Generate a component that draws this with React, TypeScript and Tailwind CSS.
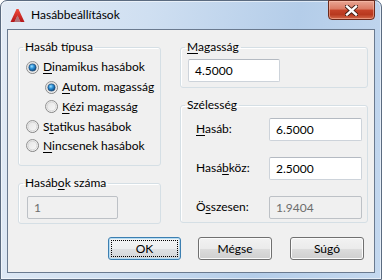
import React, { useId } from "react";

const FONT = { fontFamily: "Lato, 'Noto Sans', 'Liberation Sans', sans-serif" };

function Radio({ checked }: { checked?: boolean }) {
  const id = useId().replace(/:/g, "");
  return (
    <svg width="13" height="13" viewBox="0 0 13 13" className="shrink-0">
      <defs>
        <linearGradient id={`o${id}`} x1="0" y1="0" x2="1" y2="1">
          <stop offset="0" stopColor="#9a9a9a" />
          <stop offset="1" stopColor="#7a7a7a" />
        </linearGradient>
        <linearGradient id={`f${id}`} x1="0" y1="0" x2="1" y2="1">
          <stop offset="0" stopColor="#e2e2e2" />
          <stop offset="1" stopColor="#fbfbfb" />
        </linearGradient>
        <radialGradient id={`d${id}`} cx="0.4" cy="0.35" r="0.7">
          <stop offset="0" stopColor="#9fe0ff" />
          <stop offset="0.45" stopColor="#2a8fd6" />
          <stop offset="1" stopColor="#0c3d6e" />
        </radialGradient>
      </defs>
      <circle cx="6.5" cy="6.5" r="6" fill={`url(#f${id})`} stroke={`url(#o${id})`} strokeWidth="1" />
      <circle cx="6.5" cy="6.5" r="4.4" fill="none" stroke="#d0d0d0" strokeWidth="0.8" />
      {checked && <circle cx="6.5" cy="6.5" r="3.6" fill={`url(#d${id})`} stroke="#1b4b7a" strokeWidth="0.7" />}
    </svg>
  );
}

function Btn({ children, def, w }: { children: React.ReactNode; def?: boolean; w: string }) {
  return (
    <div
      className={`${w} h-[23px] rounded-[3px] border flex p-[2px] text-[12px] text-black ${
        def
          ? "border-[#3c7fb1] shadow-[inset_0_0_0_1px_#b6dcf3] bg-[linear-gradient(to_bottom,#f3f4f5_0%,#eceeef_50%,#dfe1e3_50%,#d3d6d9_100%)]"
          : "border-[#707070] shadow-[inset_0_0_0_1px_#fbfbfb] bg-[linear-gradient(to_bottom,#f2f2f2_0%,#ebebeb_50%,#dddddd_50%,#cfcfcf_100%)]"
      }`}
    >
      <div
        className={`flex-1 flex items-center justify-center leading-none ${
          def ? "border border-dotted border-black" : "border border-transparent"
        }`}
      >
        {children}
      </div>
    </div>
  );
}

function Input({ value, disabled, w }: { value: string; disabled?: boolean; w: string }) {
  return (
    <div
      className={`${w} h-[23px] rounded-[2px] border flex items-center pl-[6px] text-[12px] ${
        disabled ? "border-[#bdc1c6] bg-[#f0f0f0] text-[#6d6d6d]" : "border-[#cdd3da] border-t-[#b4bac2] bg-white text-black"
      }`}
    >
      {value}
    </div>
  );
}

function Group({ legend, className, children }: { legend: React.ReactNode; className: string; children: React.ReactNode }) {
  return (
    <fieldset className={`border border-[#d5dfe5] rounded-[3px] shadow-[inset_1px_1px_0_#fff] ${className}`}>
      <legend className="ml-[4px] px-[2px] text-[12px] leading-[14px] text-black">{legend}</legend>
      {children}
    </fieldset>
  );
}

function RadioRow({ checked, children, h, indent }: { checked?: boolean; children: React.ReactNode; h: string; indent?: boolean }) {
  return (
    <div className={`${h} flex items-center gap-[4px] ${indent ? "pl-[26px]" : "pl-[7px]"} text-[12px] text-black`}>
      <Radio checked={checked} />
      <span>{children}</span>
    </div>
  );
}

export default function App() {
  return (
    <div style={FONT} className="w-[382px] h-[280px] bg-white">
      <div className="w-[382px] h-[280px] rounded-t-[7px] border border-[#5b6b80] shadow-[inset_0_0_0_1px_rgba(255,255,255,0.55)] bg-[linear-gradient(100deg,#e3ebf5_0%,#cfdff1_35%,#b4cde9_70%,#c4d8ef_100%)] flex flex-col">
        <div className="h-[28px] flex items-start shrink-0">
          <div className="flex items-center h-[26px] pl-[9px] pt-[2px] gap-[6px]">
            <svg width="15" height="15" viewBox="0 0 15 15">
              <defs>
                <linearGradient id="aclogo" x1="0" y1="0" x2="0" y2="1">
                  <stop offset="0" stopColor="#f04a3a" />
                  <stop offset="1" stopColor="#b3161a" />
                </linearGradient>
              </defs>
              <path d="M0.5 14 L6.5 1 H8.5 L14.5 14 H10.5 L7.5 7.5 L4.5 14 Z" fill="url(#aclogo)" />
              <path d="M4.5 14 L7.5 7.5 L10.5 14 Z" fill="#8c1010" opacity="0.55" />
            </svg>
            <span className="text-[12px] text-black leading-none">Hasábbeállítások</span>
          </div>
          <div className="ml-auto mr-[6px] -mt-px w-[47px] h-[20px] rounded-b-[4px] border border-[#6b2a1c] shadow-[inset_0_0_0_1px_rgba(255,200,180,0.5)] bg-[linear-gradient(to_bottom,#e8a593_0%,#da7a63_45%,#c54329_50%,#b8391f_75%,#d3694b_100%)] flex items-center justify-center">
            <svg width="13" height="11" viewBox="0 0 13 11">
              <path d="M2 1.5 L11 9.5 M11 1.5 L2 9.5" stroke="#3b1a12" strokeWidth="4.2" strokeLinecap="square" />
              <path d="M2 1.5 L11 9.5 M11 1.5 L2 9.5" stroke="#ffffff" strokeWidth="2.4" strokeLinecap="square" />
            </svg>
          </div>
        </div>
        <div className="mx-[6px] mb-[6px] flex-1 border border-[#6a7a8f] bg-[#f0f0f0] flex flex-col">
          <div className="flex pt-[10px] pl-[10px] pr-[6px] gap-[19px]">
            <div className="w-[143px] flex flex-col">
              <Group legend="Hasáb típusa" className="h-[126px]">
                <div className="pt-[3px] flex flex-col">
                  <RadioRow checked h="h-[20px]">
                    <u className="underline-offset-2">D</u>inamikus hasábok
                  </RadioRow>
                  <RadioRow checked indent h="h-[20px]">
                    <u className="underline-offset-2">A</u>utom. magasság
                  </RadioRow>
                  <RadioRow indent h="h-[19px]">
                    <u className="underline-offset-2">K</u>ézi magasság
                  </RadioRow>
                  <RadioRow h="h-[21px]">
                    S<u className="underline-offset-2">t</u>atikus hasábok
                  </RadioRow>
                  <RadioRow h="h-[17px]">
                    <u className="underline-offset-2">N</u>incsenek hasábok
                  </RadioRow>
                </div>
              </Group>
              <Group legend={<>Hasáb<u className="underline-offset-2">o</u>k száma</>} className="mt-[10px] h-[48px]">
                <div className="pl-[8px] pt-[6px]">
                  <Input value="1" disabled w="w-[91px]" />
                </div>
              </Group>
            </div>
            <div className="w-[188px] flex flex-col">
              <Group legend={<><u className="underline-offset-2">M</u>agasság</>} className="h-[48px]">
                <div className="pl-[7px] pt-[5px]">
                  <Input value="4.5000" w="w-[92px]" />
                </div>
              </Group>
              <Group legend="Szélesség" className="mt-[10px] h-[125px]">
                <div className="flex flex-col pl-[15px] pr-[5px] pt-[6px] gap-[16px]">
                  <div className="flex items-start justify-between">
                    <span className="text-[12px] text-black pt-[2px]">
                      <u className="underline-offset-2">H</u>asáb:
                    </span>
                    <Input value="6.5000" w="w-[93px]" />
                  </div>
                  <div className="flex items-start justify-between">
                    <span className="text-[12px] text-black pt-[2px]">
                      Hasá<u className="underline-offset-2">b</u>köz:
                    </span>
                    <Input value="2.5000" w="w-[93px]" />
                  </div>
                  <div className="flex items-start justify-between">
                    <span className="text-[12px] text-black pt-[2px]">
                      Ö<u className="underline-offset-2">s</u>szesen:
                    </span>
                    <Input value="1.9404" disabled w="w-[93px]" />
                  </div>
                </div>
              </Group>
            </div>
          </div>
          <div className="flex justify-end pr-[10px] mt-[13px]">
            <Btn def w="w-[73px]">OK</Btn>
            <div className="w-[17px]" />
            <Btn w="w-[74px]">Mégse</Btn>
            <div className="w-[18px]" />
            <Btn w="w-[74px]">Súgó</Btn>
          </div>
        </div>
      </div>
    </div>
  );
}
